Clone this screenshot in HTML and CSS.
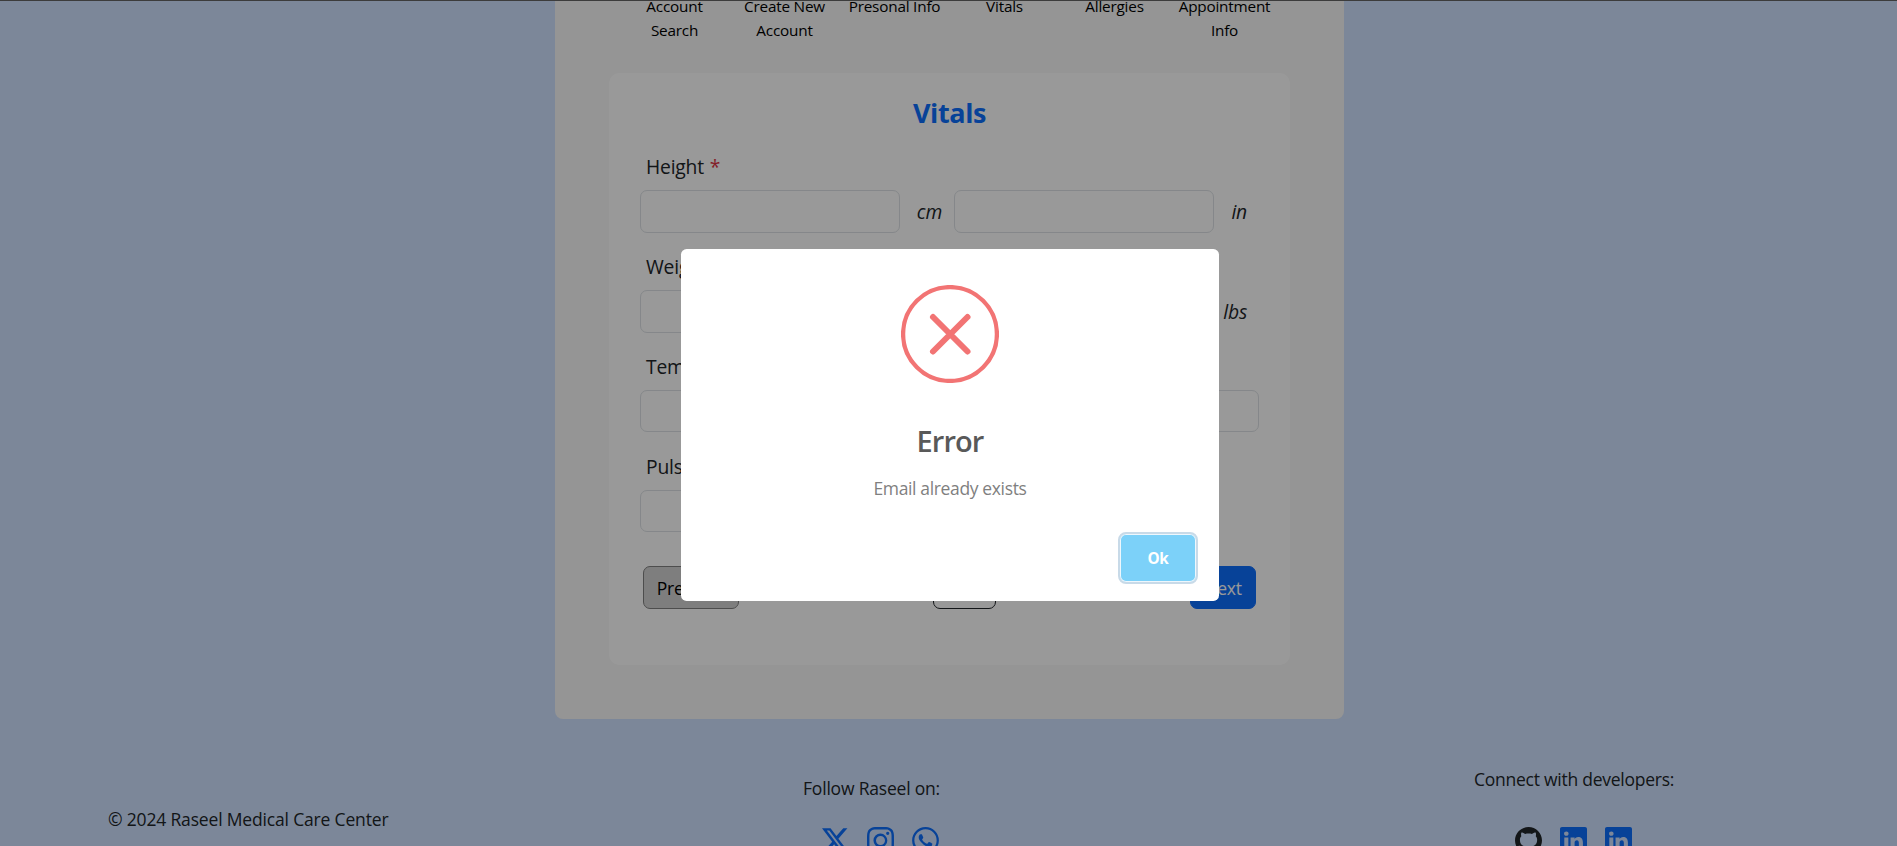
FILE: index.html
```html
<!DOCTYPE html>
<html lang="en">
<head>
<meta charset="utf-8">
<title>Raseel Medical Care Center</title>
<link rel="stylesheet" href="styles.css">
</head>
<body>
<svg class="sprite" aria-hidden="true">
  <symbol id="linkedin" viewBox="0 0 16 16"><path d="M0 1.146C0 .513.526 0 1.175 0h13.65C15.474 0 16 .513 16 1.146v13.708c0 .633-.526 1.146-1.175 1.146H1.175C.526 16 0 15.487 0 14.854zm4.943 12.248V6.169H2.542v7.225zm-1.2-8.212c.837 0 1.358-.554 1.358-1.248-.015-.709-.52-1.248-1.342-1.248S2.4 3.226 2.4 3.934c0 .694.521 1.248 1.327 1.248zm4.908 8.212V9.359c0-.216.016-.432.08-.586.173-.431.568-.878 1.232-.878.869 0 1.216.662 1.216 1.634v3.865h2.401V9.25c0-2.22-1.184-3.252-2.764-3.252-1.274 0-1.845.7-2.165 1.193v.025h-.016l.016-.025V6.169h-2.4c.03.678 0 7.225 0 7.225z"/></symbol>
</svg>
<main class="card">
  <ol class="steps">
    <li>Account Search</li>
    <li>Create New Account</li>
    <li>Presonal Info</li>
    <li>Vitals</li>
    <li>Allergies</li>
    <li>Appointment Info</li>
  </ol>
  <form class="panel">
    <h2 class="title">Vitals</h2>
    <div class="field">
      <label class="label">Height <span class="req">*</span></label>
      <div class="row"><input class="input"><i class="unit">cm</i><input class="input"><i class="unit">in</i></div>
    </div>
    <div class="field">
      <label class="label">Weight <span class="req">*</span></label>
      <div class="row"><input class="input"><i class="unit">kg</i><input class="input"><i class="unit">lbs</i></div>
    </div>
    <div class="field">
      <label class="label">Temperature</label>
      <div class="row"><input class="input short wide"></div>
    </div>
    <div class="field">
      <label class="label">Pulse</label>
      <div class="row"><input class="input short"></div>
    </div>
    <div class="actions">
      <button type="button" class="btn prev">Previous</button>
      <button type="button" class="btn skip">Skip</button>
      <button type="button" class="btn next">Next</button>
    </div>
  </form>
</main>
<footer class="footer">
  <div class="copy">© 2024 Raseel Medical Care Center</div>
  <div class="social">
    <div class="follow">Follow Raseel on:</div>
    <div class="icons">
      <svg class="icon" viewBox="0 0 16 16"><path d="M12.6.75h2.454l-5.36 6.142L16 15.25h-4.937l-3.867-5.07-4.425 5.07H.316l5.733-6.57L0 .75h5.063l3.495 4.633L12.601.75Zm-.86 13.028h1.36L4.323 2.145H2.865z"/></svg>
      <svg class="icon" viewBox="0 0 16 16"><path d="M8 0C5.829 0 5.556.01 4.703.048 3.85.088 3.269.222 2.76.42a3.9 3.9 0 0 0-1.417.923A3.9 3.9 0 0 0 .42 2.76C.222 3.268.087 3.85.048 4.7.01 5.555 0 5.827 0 8.001c0 2.172.01 2.444.048 3.297.04.852.174 1.433.372 1.942.205.526.478.972.923 1.417.444.445.89.719 1.416.923.51.198 1.09.333 1.942.372C5.555 15.99 5.827 16 8 16s2.444-.01 3.298-.048c.851-.04 1.434-.174 1.943-.372a3.9 3.9 0 0 0 1.416-.923c.445-.445.718-.891.923-1.417.197-.509.332-1.09.372-1.942C15.99 10.445 16 10.173 16 8s-.01-2.445-.048-3.299c-.04-.851-.175-1.433-.372-1.941a3.9 3.9 0 0 0-.923-1.417A3.9 3.9 0 0 0 13.24.42c-.51-.198-1.092-.333-1.943-.372C10.443.01 10.172 0 7.998 0zm-.717 1.442h.718c2.136 0 2.389.007 3.232.046.78.035 1.204.166 1.486.275.373.145.64.319.92.599s.453.546.598.92c.11.281.24.705.275 1.485.039.843.047 1.096.047 3.231s-.008 2.389-.047 3.232c-.035.78-.166 1.203-.275 1.485a2.5 2.5 0 0 1-.599.919c-.28.28-.546.453-.92.598-.28.11-.704.24-1.485.276-.843.038-1.096.047-3.232.047s-2.39-.009-3.233-.047c-.78-.036-1.203-.166-1.485-.276a2.5 2.5 0 0 1-.92-.598 2.5 2.5 0 0 1-.6-.92c-.109-.281-.24-.705-.275-1.485-.038-.843-.046-1.096-.046-3.233s.008-2.388.046-3.231c.036-.78.166-1.204.276-1.486.145-.373.319-.64.599-.92s.546-.453.92-.598c.282-.11.705-.24 1.485-.276.738-.034 1.024-.044 2.515-.045zm4.988 1.328a.96.96 0 1 0 0 1.92.96.96 0 0 0 0-1.92m-4.27 1.122a4.109 4.109 0 1 0 0 8.217 4.109 4.109 0 0 0 0-8.217m0 1.441a2.667 2.667 0 1 1 0 5.334 2.667 2.667 0 0 1 0-5.334"/></svg>
      <svg class="icon" viewBox="0 0 16 16"><path d="M13.601 2.326A7.85 7.85 0 0 0 7.994 0C3.627 0 .068 3.558.064 7.926c0 1.399.366 2.76 1.057 3.965L0 16l4.204-1.102a7.9 7.9 0 0 0 3.79.965h.004c4.368 0 7.926-3.558 7.93-7.93A7.9 7.9 0 0 0 13.6 2.326zM7.994 14.521a6.6 6.6 0 0 1-3.356-.92l-.24-.144-2.494.654.666-2.433-.156-.251a6.56 6.56 0 0 1-1.007-3.505c0-3.626 2.957-6.584 6.591-6.584a6.56 6.56 0 0 1 4.66 1.931 6.56 6.56 0 0 1 1.928 4.66c-.004 3.639-2.961 6.592-6.592 6.592m3.615-4.934c-.197-.099-1.17-.578-1.353-.646-.182-.065-.315-.099-.445.099-.133.197-.513.646-.627.775-.114.133-.232.148-.43.05-.197-.1-.836-.308-1.592-.985-.59-.525-.985-1.175-1.103-1.372-.114-.198-.011-.304.088-.403.087-.088.197-.232.296-.346.1-.114.133-.198.198-.33.065-.134.034-.248-.015-.347-.05-.099-.445-1.076-.612-1.47-.16-.389-.323-.335-.445-.34-.114-.007-.247-.007-.38-.007a.73.73 0 0 0-.529.247c-.182.198-.691.677-.691 1.654s.71 1.916.81 2.049c.098.133 1.394 2.132 3.383 2.992.47.205.84.326 1.129.418.475.152.904.129 1.246.08.38-.058 1.171-.48 1.338-.943.164-.464.164-.86.114-.943-.049-.084-.182-.133-.38-.232"/></svg>
    </div>
  </div>
  <div class="devs">
    <div class="connect">Connect with developers:</div>
    <div class="icons">
      <svg class="icon dark" viewBox="0 0 16 16"><path d="M8 0C3.58 0 0 3.58 0 8c0 3.54 2.29 6.53 5.47 7.59.4.07.55-.17.55-.38 0-.19-.01-.82-.01-1.49-2.01.37-2.53-.49-2.69-.94-.09-.23-.48-.94-.82-1.13-.28-.15-.68-.52-.01-.53.63-.01 1.08.58 1.23.82.72 1.21 1.87.87 2.33.66.07-.52.28-.87.51-1.07-1.78-.2-3.64-.89-3.64-3.95 0-.87.31-1.59.82-2.15-.08-.2-.36-1.02.08-2.12 0 0 .67-.21 2.2.82.64-.18 1.32-.27 2-.27s1.36.09 2 .27c1.53-1.04 2.2-.82 2.2-.82.44 1.1.16 1.92.08 2.12.51.56.82 1.27.82 2.15 0 3.07-1.87 3.75-3.65 3.95.29.25.54.73.54 1.48 0 1.07-.01 1.93-.01 2.2 0 .21.15.46.55.38A8.01 8.01 0 0 0 16 8c0-4.42-3.58-8-8-8"/></svg>
      <svg class="icon"><use href="#linkedin"/></svg>
      <svg class="icon"><use href="#linkedin"/></svg>
    </div>
  </div>
</footer>
<div class="overlay">
  <div class="modal" role="dialog">
    <svg class="error-icon" viewBox="0 0 98 98"><circle cx="49" cy="49" r="46.9"/><path d="M32 32 66.500 66.500M66.500 32 32 66.500"/></svg>
    <div class="modal-title">Error</div>
    <div class="modal-text">Email already exists</div>
    <div class="modal-foot"><button type="button" class="ok">Ok</button></div>
  </div>
</div>
</body>
</html>
```
FILE: styles.css
```css
* { box-sizing: border-box; }
body {
  margin: 0;
  height: 846px;
  overflow: hidden;
  background: #cfe2ff;
  color: #212529;
  font-family: "Open Sans", "Noto Sans", sans-serif;
  font-size: 17.5px;
  letter-spacing: -0.2px;
}
.sprite { position: absolute; width: 0; height: 0; }

.card {
  width: 789px;
  height: 719px;
  margin-left: 555px;
  padding: 0 54px;
  overflow: hidden;
  background: #f8f8f8;
  border-radius: 0 0 8px 8px;
}
.steps {
  display: grid;
  grid-template-columns: repeat(6, 110px);
  justify-content: center;
  height: 47px;
  margin: -5px 0 31px;
  padding: 0;
  list-style: none;
  color: #000;
  font-size: 15.3px;
  line-height: 23.6px;
  text-align: center;
}
.steps li { padding: 0 8px; }

.panel {
  height: 592px;
  padding: 23px 31px 0;
  background: #fff;
  border-radius: 10px;
}
.title {
  margin: 0 0 22px;
  color: #0d6efd;
  font-size: 27px;
  font-weight: 700;
  line-height: 34px;
  letter-spacing: -0.4px;
  text-align: center;
}
.field { height: 100px; }
.label {
  display: block;
  height: 30px;
  margin-bottom: 8px;
  padding-left: 6px;
  font-size: 19.3px;
  line-height: 30px;
}
.req { color: #dc3545; margin-left: 1px; }
.row { display: flex; align-items: center; }
.input {
  width: 260px;
  height: 43px;
  padding: 0 14px;
  border: 1px solid #dee2e6;
  border-radius: 7px;
  background: #fff;
}
.short { height: 42px; }
.wide { width: 619px; }
.unit {
  width: 54px;
  padding-right: 12px;
  font-size: 19.3px;
  line-height: 30px;
  text-align: right;
}
.unit:last-child { width: 45px; }
.actions {
  display: flex;
  justify-content: space-between;
  margin-top: 14px;
  padding: 0 3px;
}
.btn {
  height: 43px;
  padding: 0;
  border: 1px solid;
  border-radius: 7px;
  font: inherit;
  letter-spacing: inherit;
}
.prev { width: 96px; background: #d3d3d3; border-color: #808080; color: #000; }
.skip { width: 63px; margin-right: 1px; background: #fff; border-color: #212529; color: #212529; }
.next { width: 66px; background: #0d6efd; border-color: #0d6efd; color: #fff; }

.footer {
  display: flex;
  padding-left: 108px;
  line-height: 26px;
  white-space: nowrap;
}
.copy { width: 695px; padding-top: 87px; letter-spacing: -0.17px; }
.social { width: 671px; padding-top: 56px; }
.devs { padding-top: 47px; }
.connect { letter-spacing: -0.25px; }
.icons { display: flex; gap: 18px; }
.social .icons { margin: 26px 0 0 18.500px; }
.devs .icons { margin: 35px 0 0 41px; }
.icon { width: 27px; height: 27px; fill: #0d6efd; }
.dark { fill: #212529; }

.overlay {
  position: fixed;
  inset: 0;
  background: rgba(0, 0, 0, 0.4);
  border-top: 1px solid #3c3c3c;
}
.modal {
  width: 538px;
  height: 352px;
  margin: 248px 0 0 681px;
  padding: 36px 21px 0;
  background: #fff;
  border-radius: 5.600px;
  text-align: center;
}
.error-icon {
  display: block;
  width: 98px;
  height: 98px;
  margin: 0 auto;
  fill: none;
  stroke: #f27474;
  stroke-width: 4.300px;
}
.error-icon path { stroke-width: 6px; stroke-linecap: round; }
.modal-title {
  margin-top: 36px;
  color: #595959;
  font-size: 29px;
  font-weight: 600;
  line-height: 44px;
  letter-spacing: -0.9px;
}
.modal-text {
  margin-top: 12px;
  color: #7f7f7f;
  line-height: 26px;
  letter-spacing: -0.36px;
}
.modal-foot { display: flex; justify-content: flex-end; margin-top: 31px; }
.ok {
  width: 80px;
  height: 52px;
  padding: 0;
  background: #7cd1f9 padding-box;
  border: 2px solid #c8dae8;
  border-radius: 8px;
  box-shadow: inset 0 0 0 1px #eef7fd;
  color: #fff;
  font: 700 15.3px "Open Sans", sans-serif;
  letter-spacing: -0.4px;
}
```
